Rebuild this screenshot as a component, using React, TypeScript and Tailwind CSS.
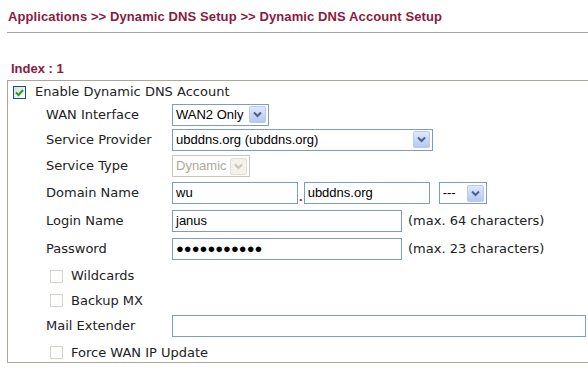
import React from "react";

const label = "font-['DejaVu_Sans',Verdana,sans-serif] text-[13px] text-[#222]";
const field = "font-['Liberation_Sans',Arial,sans-serif] text-[13px]";

function Arrow({ disabled = false }: { disabled?: boolean }) {
  return (
    <span
      className={
        "flex h-[17px] w-[17px] items-center justify-center rounded-[2px] border " +
        (disabled
          ? "border-[#e2e0d6] bg-[#f2f1ea]"
          : "border-[#b9c9ef] bg-gradient-to-b from-[#dfe8fd] to-[#b4c7f6]")
      }
    >
      <svg width="9" height="7" viewBox="0 0 9 7">
        <path
          d="M1 1.5 L4.5 5 L8 1.5"
          fill="none"
          stroke={disabled ? "#c9c7ba" : "#4d6185"}
          strokeWidth="2"
        />
      </svg>
    </span>
  );
}

function Select({ w, value, disabled = false }: { w: string; value: string; disabled?: boolean }) {
  return (
    <div
      className={
        `${w} ${field} flex h-[22px] items-center justify-between border pl-[3px] pr-[2px] ` +
        (disabled ? "border-[#c9c7ba] text-[#aca899]" : "border-[#7f9db9] text-black")
      }
    >
      <span>{value}</span>
      <Arrow disabled={disabled} />
    </div>
  );
}

function Input({ w, value }: { w: string; value: string }) {
  return (
    <div className={`${w} ${field} flex h-[22px] items-center border border-[#7f9db9] pl-[3px] text-black`}>
      {value}
    </div>
  );
}

function Check({ checked = false }: { checked?: boolean }) {
  return checked ? (
    <span className="flex h-[13px] w-[13px] items-center justify-center border border-[#1c5180] bg-gradient-to-br from-[#dcdcd7] to-white">
      <svg width="9" height="9" viewBox="0 0 9 9">
        <path d="M1 4.5 L3.5 7 L8 2" fill="none" stroke="#21a121" strokeWidth="2" />
      </svg>
    </span>
  ) : (
    <span className="h-[13px] w-[13px] border border-[#d6d4ca] bg-white" />
  );
}

function Row({ h, name, children }: { h: string; name: string; children: React.ReactNode }) {
  return (
    <div className={`${h} flex items-center`}>
      <span className={`${label} w-[164px] shrink-0 pl-[38px]`}>{name}</span>
      <div className="flex items-center">{children}</div>
    </div>
  );
}

function CheckRow({ h, name }: { h: string; name: string }) {
  return (
    <div className={`${h} flex items-center gap-[8px] pl-[42px]`}>
      <Check />
      <span className={label}>{name}</span>
    </div>
  );
}

export default function App() {
  return (
    <div className="h-[375px] w-[588px] overflow-hidden bg-white">
      <div className="h-[32px] pl-[8px] pt-[9px] font-['Liberation_Sans',Arial,sans-serif] text-[13px] font-bold leading-[16px] tracking-[0.1px] text-[#8b1a3f]">
        Applications &gt;&gt; Dynamic DNS Setup &gt;&gt; Dynamic DNS Account Setup
      </div>
      <div className="ml-[7px] border-t border-[#a7a39b]" />
      <div className="h-[28px]" />
      <div className="h-[16px] pl-[11px] font-['Liberation_Sans',Arial,sans-serif] text-[13px] font-bold leading-[16px] text-[#8b1a3f]">
        Index : 1
      </div>
      <div className="ml-[7px] mt-[3px] w-[600px] border-y border-l border-[#aca899]">
        <div className="flex h-[22px] items-center gap-[9px] pl-[5px]">
          <Check checked />
          <span className={label}>Enable Dynamic DNS Account</span>
        </div>
        <Row h="h-[23px]" name="WAN Interface">
          <Select w="w-[97px]" value="WAN2 Only" />
        </Row>
        <Row h="h-[27px]" name="Service Provider">
          <Select w="w-[261px]" value="ubddns.org (ubddns.org)" />
        </Row>
        <Row h="h-[26px]" name="Service Type">
          <Select w="w-[78px]" value="Dynamic" disabled />
        </Row>
        <Row h="h-[28px]" name="Domain Name">
          <Input w="w-[126px]" value="wu" />
          <span className="mx-px self-end pb-[1px] text-[13px] leading-[13px] font-bold text-[#8b1a3f]">.</span>
          <Input w="w-[126px]" value="ubddns.org" />
          <div className="ml-[9px]">
            <Select w="w-[48px]" value="---" />
          </div>
        </Row>
        <Row h="h-[28px]" name="Login Name">
          <Input w="w-[230px]" value="janus" />
          <span className={`${label} ml-[6px]`}>(max. 64 characters)</span>
        </Row>
        <Row h="h-[28px]" name="Password">
          <Input w="w-[230px]" value="●●●●●●●●●●●" />
          <span className={`${label} ml-[6px]`}>(max. 23 characters)</span>
        </Row>
        <CheckRow h="h-[26px]" name="Wildcards" />
        <CheckRow h="h-[23px]" name="Backup MX" />
        <Row h="h-[28px]" name="Mail Extender">
          <Input w="w-[414px]" value="" />
        </Row>
        <CheckRow h="h-[22px] pt-[3px]" name="Force WAN IP Update" />
      </div>
    </div>
  );
}
